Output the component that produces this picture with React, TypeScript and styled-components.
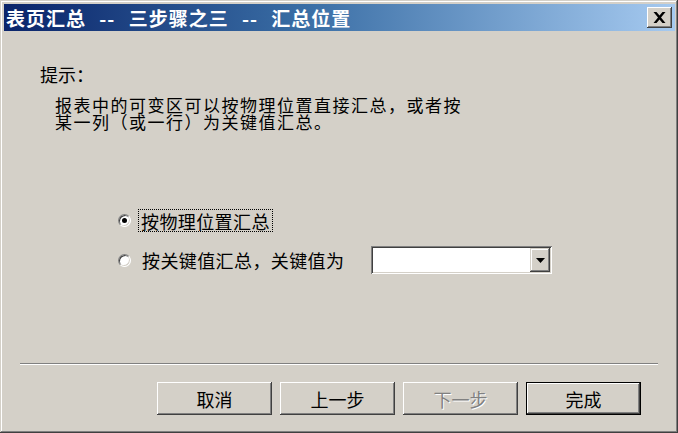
import React from 'react';
import styled, { createGlobalStyle } from 'styled-components';

const GlobalStyle = createGlobalStyle`
  html, body {
    margin: 0;
    padding: 0;
    background: #d4d0c8;
  }
  * {
    box-sizing: border-box;
  }
`;

const CJK = `'Noto Sans CJK SC', 'Noto Sans', sans-serif`;

const App: React.FC = () => {
  return (
    <>
      <GlobalStyle />
      <Window>
        <TitleBar>
          <Title>表页汇总 -- 三步骤之三 -- 汇总位置</Title>
          <CloseButton aria-label="close">
            <svg width="13" height="11" viewBox="0 0 13 11">
              <path d="M0.5 0h3l3 3.6L9.5 0h3L8 5.5l4.5 5.5h-3l-3-3.6L3.5 11h-3L5 5.5z" fill="#000" />
            </svg>
          </CloseButton>
        </TitleBar>

        <Content>
          <Hint>提示：</Hint>
          <Description>
            <Line>报表中的可变区可以按物理位置直接汇总，或者按</Line>
            <Line>某一列（或一行）为关键值汇总。</Line>
          </Description>

          <Options>
            <OptionRow>
              <Radio checked />
              <FocusLabel>按物理位置汇总</FocusLabel>
            </OptionRow>
            <OptionRow>
              <Radio />
              <Label>按关键值汇总，关键值为</Label>
              <Combo>
                <ComboField />
                <ComboArrow>
                  <svg width="9" height="5" viewBox="0 0 9 5">
                    <path d="M0 0h9L4.5 5z" fill="#000" />
                  </svg>
                </ComboArrow>
              </Combo>
            </OptionRow>
          </Options>
        </Content>

        <Footer>
          <Separator />
          <ButtonRow>
            <Button>取消</Button>
            <Button>上一步</Button>
            <Button disabled>下一步</Button>
            <Button $default>完成</Button>
          </ButtonRow>
        </Footer>
      </Window>
    </>
  );
};

export default App;

const Window = styled.div`
  width: 678px;
  height: 433px;
  display: flex;
  flex-direction: column;
  padding: 4px 3px 3px 4px;
  background: #d4d0c8;
  box-shadow: inset -1px -1px #404040, inset 1px 1px #d4d0c8, inset -2px -2px #808080, inset 2px 2px #ffffff;
`;

const TitleBar = styled.div`
  height: 27px;
  display: flex;
  align-items: center;
  justify-content: space-between;
  padding: 0 3px 0 2px;
  background: linear-gradient(to right, #0a246a 0%, #3a6ea5 45%, #a6caf0 100%);
`;

const Title = styled.span`
  font-family: ${CJK};
  font-weight: 700;
  font-size: 19px;
  line-height: 20px;
  letter-spacing: 1px;
  word-spacing: 8px;
  color: #ffffff;
  white-space: pre;
`;

const CloseButton = styled.button`
  width: 25px;
  height: 21px;
  padding: 0;
  border: none;
  display: flex;
  align-items: center;
  justify-content: center;
  background: #d4d0c8;
  box-shadow: inset -1px -1px #404040, inset 1px 1px #ffffff, inset -2px -2px #808080, inset 2px 2px #d4d0c8;
`;

const Content = styled.div`
  flex: 1;
  display: flex;
  flex-direction: column;
  padding: 33px 0 0 36px;
  font-family: ${CJK};
  color: #000000;
`;

const Hint = styled.div`
  font-size: 18px;
  line-height: 21px;
`;

const Description = styled.div`
  margin: 11px 0 0 15px;
  display: flex;
  flex-direction: column;
`;

const Line = styled.div`
  font-size: 17px;
  line-height: 17px;
  letter-spacing: 1.5px;
  white-space: nowrap;
`;

const Options = styled.div`
  margin: 76px 0 0 78px;
  display: flex;
  flex-direction: column;
  gap: 12px;
`;

const OptionRow = styled.div`
  height: 28px;
  display: flex;
  align-items: center;
`;

const Radio = styled.span<{ checked?: boolean }>`
  position: relative;
  width: 13px;
  height: 13px;
  margin-right: 11px;
  border-radius: 50%;
  background: #ffffff;
  border: 1px solid;
  border-color: #808080 #ffffff #ffffff #808080;
  box-shadow: inset 1px 1px #404040, inset -1px -1px #d4d0c8;

  &::after {
    content: '';
    display: ${(p) => (p.checked ? 'block' : 'none')};
    position: absolute;
    left: 3px;
    top: 3px;
    width: 5px;
    height: 5px;
    border-radius: 50%;
    background: #000000;
  }
`;

const Label = styled.span`
  font-size: 18px;
  line-height: 20px;
  letter-spacing: 0.4px;
  margin-right: 27px;
`;

const FocusLabel = styled(Label)`
  padding: 1px 2px 0;
  margin-left: -3px;
  outline: 1px dotted #000000;
  outline-offset: 0;
`;

const Combo = styled.div`
  width: 181px;
  height: 28px;
  display: flex;
  align-items: stretch;
  padding: 2px;
  background: #ffffff;
  box-shadow: inset 1px 1px #808080, inset -1px -1px #ffffff, inset 2px 2px #404040, inset -2px -2px #d4d0c8;
`;

const ComboField = styled.div`
  flex: 1;
`;

const ComboArrow = styled.div`
  width: 20px;
  display: flex;
  align-items: center;
  justify-content: center;
  background: #d4d0c8;
  box-shadow: inset -1px -1px #404040, inset 1px 1px #d4d0c8, inset -2px -2px #808080, inset 2px 2px #ffffff;
`;

const Footer = styled.div`
  display: flex;
  flex-direction: column;
  padding: 0 0 15px 0;
`;

const Separator = styled.div`
  margin: 0 17px 0 16px;
  height: 2px;
  border-top: 1px solid #808080;
  border-bottom: 1px solid #ffffff;
`;

const ButtonRow = styled.div`
  margin-top: 17px;
  display: flex;
  justify-content: flex-end;
  gap: 8px;
  padding-right: 34px;
`;

const Button = styled.button<{ $default?: boolean }>`
  width: 115px;
  height: 33px;
  padding: 0;
  border: ${(p) => (p.$default ? '1px solid #000000' : 'none')};
  background: #d4d0c8;
  font-family: ${CJK};
  font-size: 18px;
  line-height: 20px;
  color: #000000;
  box-shadow: inset -1px -1px #404040, inset 1px 1px #ffffff, inset -2px -2px #808080, inset 2px 2px #d4d0c8;

  &:disabled {
    color: #808080;
    text-shadow: 1px 1px #ffffff;
  }
`;
